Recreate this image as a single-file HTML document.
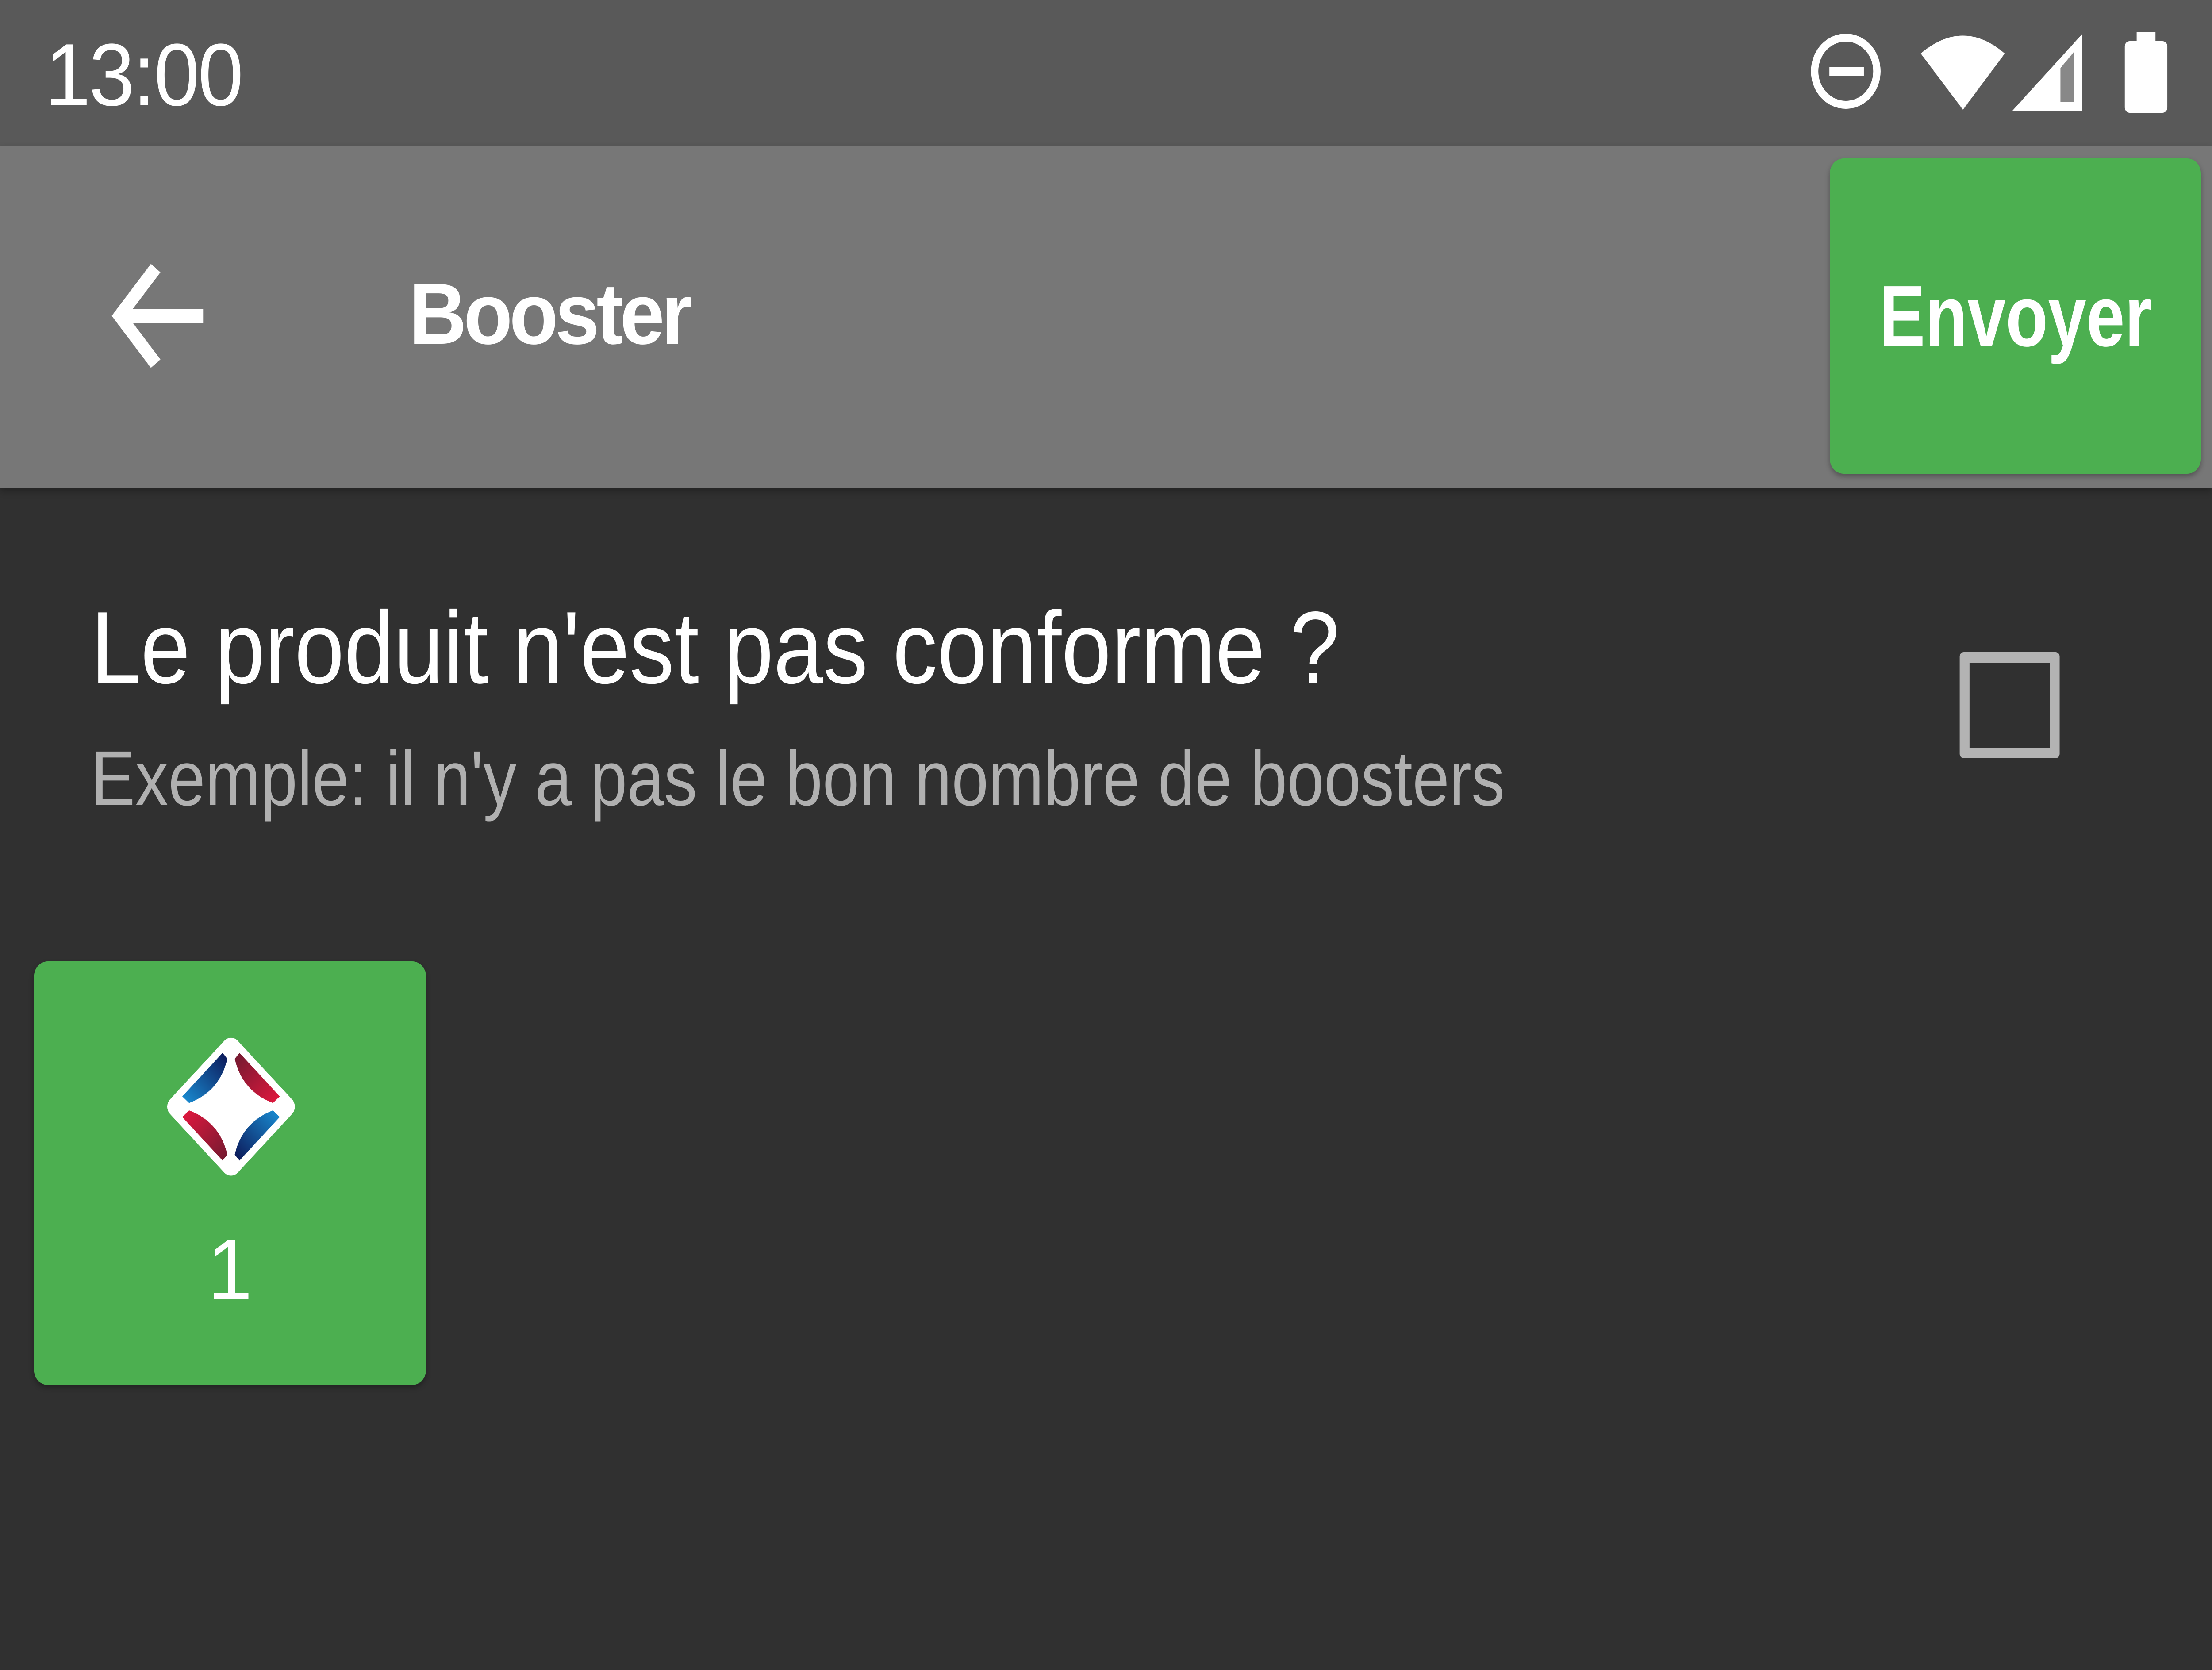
<!DOCTYPE html>
<html><head><meta charset="utf-8"><style>
*{margin:0;padding:0;box-sizing:border-box}
html,body{margin:0;background:#303030;overflow:hidden}
#w{width:5400px;height:3775px;background:#303030;position:relative;overflow:hidden;font-family:"Liberation Sans",Arial,sans-serif;transform-origin:0 0}
.abs{position:absolute}
</style></head><body>
<div id="w">
<div class="abs" style="left:0;top:0;width:5400px;height:330px;background:#595959"></div>
<div class="abs" style="left:0;top:330px;width:5400px;height:772px;background:#777777;box-shadow:0 8px 16px rgba(0,0,0,.3)"></div>
<div class="abs" style="left:110px;top:60px;font-size:200px;line-height:220px;color:#fff;letter-spacing:-4px">13:00</div>
<svg class="abs" style="left:0;top:0" width="5400" height="330">
<circle cx="4506" cy="161" r="76" fill="none" stroke="#fff" stroke-width="18"/>
<rect x="4466" y="152" width="84" height="20" fill="#fff"/>
<path d="M4689 121 Q4792 40 4894 121 L4792 248 Z" fill="#fff"/>
<path d="M4913 250 L5083 77 L5083 250 Z" fill="#fff"/>
<path d="M5030 154 L5064 116 L5064 231 L5030 231 Z" fill="#888"/>
<rect x="5216" y="73" width="46" height="24" fill="#fff"/>
<rect x="5187" y="93" width="104" height="162" rx="12" fill="#fff"/>
</svg>
<svg class="abs" style="left:0;top:330px" width="800" height="772">
<path d="M496 384 H300" stroke="#fff" stroke-width="32" fill="none"/>
<path d="M380 276 L292 384 L380 492" stroke="#fff" stroke-width="30" fill="none" stroke-linejoin="miter"/>
</svg>
<div class="abs" style="left:998px;top:600px;font-size:196px;line-height:220px;font-weight:bold;color:#fff;letter-spacing:-8px">Booster</div>
<div class="abs" style="left:4467px;top:358px;width:906px;height:713px;background:#4caf50;border-radius:34px;box-shadow:0 6px 12px rgba(0,0,0,.3)"></div>
<div class="abs" style="left:4467px;top:358px;width:906px;height:713px;line-height:713px;text-align:center;font-size:196px;font-weight:bold;color:#fff;transform:scaleX(0.86)">Envoyer</div>
<div class="abs" style="left:222px;top:1325px;font-size:232px;line-height:280px;color:#fff;white-space:nowrap;transform:scaleX(0.94);transform-origin:0 0">Le produit n'est pas conforme ?</div>
<div class="abs" style="left:222px;top:1650px;font-size:176px;line-height:220px;color:#b0b0b0;white-space:nowrap;transform:scaleX(0.92);transform-origin:0 0">Exemple: il n'y a pas le bon nombre de boosters</div>
<div class="abs" style="left:4784px;top:1474px;width:244px;height:240px;border:24px solid #b3b3b3;border-radius:10px"></div>
<div class="abs" style="left:83px;top:2173px;width:957px;height:958px;background:#4caf50;border-radius:34px;box-shadow:0 6px 12px rgba(0,0,0,.3)"></div>
<svg class="abs" style="left:380px;top:2300px" width="380" height="400" viewBox="0 0 1140 1200">
<defs>
<linearGradient id="b1" x1="0" y1="1" x2="1" y2="0"><stop offset="0" stop-color="#1a8fd5"/><stop offset="1" stop-color="#0c1656"/></linearGradient>
<linearGradient id="b2" x1="1" y1="0" x2="0" y2="1"><stop offset="0" stop-color="#1a8fd5"/><stop offset="1" stop-color="#0c1656"/></linearGradient>
<linearGradient id="r1" x1="1" y1="1" x2="0" y2="0"><stop offset="0" stop-color="#e3183e"/><stop offset="1" stop-color="#701a30"/></linearGradient>
<linearGradient id="r2" x1="0" y1="0" x2="1" y2="1"><stop offset="0" stop-color="#e3183e"/><stop offset="1" stop-color="#701a30"/></linearGradient>
</defs>
<rect x="-351" y="-351" width="702" height="702" rx="70" fill="#fff" transform="translate(552 605) rotate(45)"/>
<path d="M195 535 L490 240 L525 280 Q470 500 245 580 Z" fill="url(#b1)"/>
<path d="M909 535 L614 240 L579 280 Q634 500 859 580 Z" fill="url(#r1)"/>
<path d="M195 675 L490 970 L525 930 Q470 710 245 630 Z" fill="url(#r2)"/>
<path d="M909 675 L614 970 L579 930 Q634 710 859 630 Z" fill="url(#b2)"/>
</svg>
<div class="abs" style="left:83px;top:2760px;width:957px;text-align:center;font-size:196px;line-height:220px;color:#fff">1</div>
</div>
<script>
(function(){var w=document.getElementById('w');function f(){var sx=window.innerWidth/5400,sy=window.innerHeight/3775;if(!(sx>0))sx=1;if(!(sy>0))sy=1;w.style.transform='scale('+sx+','+sy+')';}f();window.addEventListener('resize',f);})();
</script>
</body></html>
